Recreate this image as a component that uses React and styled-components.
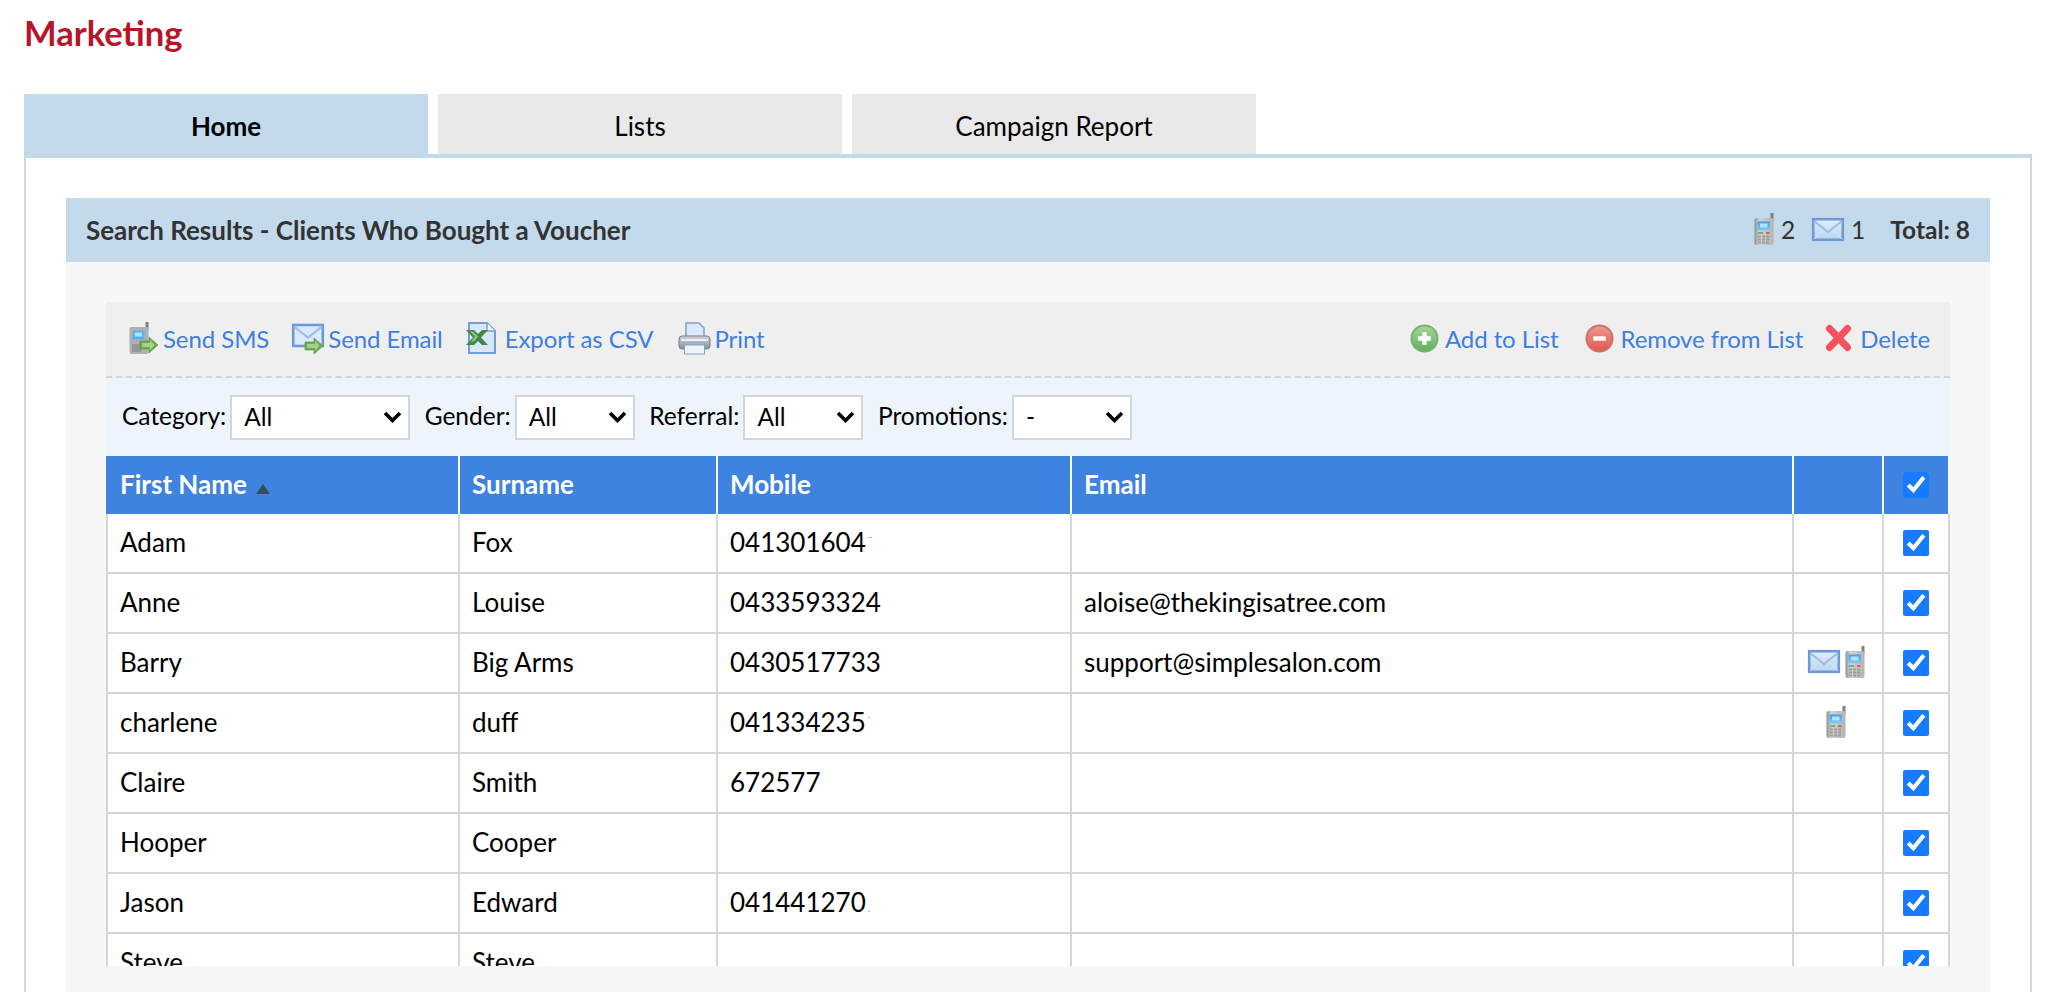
import React from 'react';
import styled, { createGlobalStyle } from 'styled-components';

const Global = createGlobalStyle`
  html, body { margin: 0; height: 100%; overflow: hidden; background: #fff; }
  body { font-family: Lato, "Open Sans", sans-serif; font-size: 24px; color: #000; }
  #root { height: 100%; }
`;

const Page = styled.div`
  height: 992px; display: flex; flex-direction: column; padding: 0 26px 0 24px; box-sizing: border-box;
`;
const Title = styled.h1`
  margin: 0; height: 94px; padding-top: 12px; box-sizing: border-box;
  font-size: 34.6px; line-height: 42px; font-weight: 700; color: #b71529;
`;
const Tabs = styled.div`display: flex; gap: 10px; height: 60px;`;
const Tab = styled.div`
  width: 404px; height: ${p => (p.$active ? 64 : 60)}px; flex: none;
  display: flex; align-items: center; justify-content: center; padding-top: ${p => (p.$active ? 0 : 4)}px; box-sizing: border-box;
  background: ${p => (p.$active ? '#c3daed' : '#e9e9e9')};
  font-weight: ${p => (p.$active ? 700 : 400)}; color: #000; font-size: 26px;
`;
const Panel = styled.div`
  flex: 1; min-height: 0; display: flex; flex-direction: column; box-sizing: border-box;
  border-top: 4px solid #c3daed; border-left: 2px solid #d5d5d5; border-right: 2px solid #d5d5d5;
  padding: 40px 40px 0;
`;
const Section = styled.section`flex: 1; min-height: 0; display: flex; flex-direction: column; background: #f7f7f7;`;
const SectionHead = styled.header`
  height: 64px; flex: none; display: flex; align-items: center; justify-content: space-between;
  background: #c3daed; padding: 0 20px; color: #333;
`;
const SectionTitle = styled.h2`margin: 0; font-size: 26px; font-weight: 700; color: #333;`;
const Stats = styled.div`display: flex; align-items: center; font-size: 24.5px; color: #333; padding-bottom: 2px;`;
const StatCount = styled.span`margin: 0 17px 0 7px;`;
const Total = styled.strong`margin-left: 8px; font-weight: 700;`;
const SectionBody = styled.div`flex: 1; min-height: 0; display: flex; flex-direction: column; padding: 40px 40px 26px;`;

const Toolbar = styled.div`
  height: 76px; flex: none; box-sizing: border-box; display: flex; align-items: center; justify-content: space-between;
  background: #efefef; border-bottom: 2px dashed #d5d5d5; padding: 0 20px 2px 23px;
`;
const Actions = styled.div`display: flex; align-items: center;`;
const Action = styled.a`
  display: flex; align-items: center; gap: ${p => p.$gap ?? 5}px; margin-left: ${p => p.$ml ?? 0}px;
  color: #3e7fe0; text-decoration: none; font-size: 24px; letter-spacing: -0.08px;
`;
const Filters = styled.div`
  height: 78px; flex: none; box-sizing: border-box; display: flex; align-items: center; gap: 14.5px;
  background: #edf4fb; padding: 0 16px;
`;
const Filter = styled.label`display: flex; align-items: center; gap: 4px; font-size: 24.5px; color: #000; line-height: 30px; padding-bottom: 0;`;
const Select = styled.select`
  appearance: none; width: ${p => p.$w}px; height: 45px; box-sizing: border-box;
  border: 2px solid #d5d5d5; border-radius: 0; padding: 0 0 2px 12px; margin: 0;
  font: 24.5px Lato, sans-serif; color: #000;
  background: #fff url("data:image/svg+xml,%3Csvg xmlns='http://www.w3.org/2000/svg' width='19' height='12'%3E%3Cpath d='M2 2l7.5 7.5L17 2' fill='none' stroke='%23000' stroke-width='3.6'/%3E%3C/svg%3E") no-repeat right 6px center;
`;
const FilterLabel = styled.span`margin-top: -2px;`;
const TableWrap = styled.div`flex: 1; min-height: 0; overflow: hidden;`;
const Table = styled.table`
  width: 1844px; table-layout: fixed; border-collapse: separate; border-spacing: 0; background: #fff;
`;
const Th = styled.th`
  height: 58px; box-sizing: border-box; padding: 0 0 2px 12px; text-align: left;
  background: #3e83e0; color: #fff; font-size: 26px; font-weight: 700; border-right: 2px solid #fff;
  &:first-child { padding-left: 14px; }
  &:last-child { border-right-color: #f7f7f7; padding: 0; }
`;
const SortArrow = styled.span`
  display: inline-block; margin-left: 9px; width: 0; height: 0; vertical-align: 0;
  border-left: 7.5px solid transparent; border-right: 7.5px solid transparent; border-bottom: 10px solid #3a4a5e;
`;
const Td = styled.td`
  height: 60px; box-sizing: border-box; padding: 0 0 3px 12px; font-size: 26px; color: #000;
  border-right: 2px solid #d5d5d5; border-bottom: 2px solid #d5d5d5; white-space: nowrap;
  &:first-child { border-left: 2px solid #d5d5d5; }
`;
const IconCell = styled(Td)`padding: 0;`;
const IconGroup = styled.div`display: flex; align-items: center; justify-content: center; gap: 5px; padding: 0 4px 3px 0;`;
const CheckCell = styled(Td)`padding: 0;`;
const Check = styled.input.attrs({ type: 'checkbox' })`
  display: block; width: 26px; height: 26px; margin: 0 auto; accent-color: #167bff;
`;
const Smudge = styled.span`
  display: inline-block; width: ${p => p.$w}px; height: 1px; background: #b5b5b5; margin-left: 2px;
  vertical-align: ${p => p.$v}px;
`;
const Icon = styled.svg`flex: none; display: block; filter: blur(0.45px); overflow: visible;`;

const Phone = () => (
  <Icon width="20" height="32" viewBox="0 0 20 32">
    <defs>
      <linearGradient id="ph" x1="0" x2="1"><stop offset="0" stopColor="#8f8f8f" /><stop offset=".25" stopColor="#d2d2d2" /><stop offset="1" stopColor="#b4b4b4" /></linearGradient>
      <linearGradient id="scr" x1="0" y1="0" x2="0" y2="1"><stop offset="0" stopColor="#3aa0ec" /><stop offset="1" stopColor="#86c9f6" /></linearGradient>
    </defs>
    <rect x="16.5" y="0" width="3" height="8" fill="#808080" />
    <rect x="0.5" y="5" width="19" height="27" rx="2" fill="url(#ph)" />
    <rect x="3.5" y="8.5" width="12.5" height="9" rx="1" fill="url(#scr)" />
    <rect x="6" y="10.5" width="7.5" height="4" fill="#b3e0fb" />
    <rect x="4" y="19" width="5" height="2" fill="#7cb06a" />
    <rect x="12" y="19" width="3.5" height="2" fill="#d9636a" />
    {[22.5, 25.5, 28.5].map(y => [4, 8, 12].map(x => <rect key={`${x}-${y}`} x={x} y={y} width="3" height="2" fill="#9c9c9c" />))}
  </Icon>
);
const Envelope = () => (
  <Icon width="32" height="23" viewBox="0 0 32 23">
    <defs><linearGradient id="env" x1="0" y1="0" x2="0" y2="1"><stop offset="0" stopColor="#e2edfb" /><stop offset="1" stopColor="#bcd4f2" /></linearGradient></defs>
    <rect x="1.2" y="1.2" width="29.6" height="20.6" fill="url(#env)" stroke="#6e9ad3" strokeWidth="2.6" />
    <path d="M2 3l14 11 14-11" fill="none" stroke="#9dbde6" strokeWidth="2.2" />
    <path d="M2 21l9-9M30 21l-9-9" fill="none" stroke="#d4e3f5" strokeWidth="1" />
  </Icon>
);
const Arrow = ({ x, y }) => (
  <g transform={`translate(${x} ${y})`}>
    <path d="M0 4h9V0l9 8-9 8v-4H0z" fill="#6fab55" stroke="#5c9a46" strokeWidth=".7" />
    <path d="M2 6h8V3l4.5 5-4.5 5V10H2z" fill="#a5d18f" />
  </g>
);
const SmsIcon = () => (
  <Icon width="30" height="32" viewBox="0 0 30 32">
    <rect x="16.5" y="0" width="3" height="8" fill="#808080" />
    <rect x="0.5" y="5" width="19" height="27" rx="2" fill="#b0b0b0" />
    <rect x="3.5" y="8.5" width="12" height="9" fill="#59b1ef" />
    <rect x="6" y="10.5" width="7" height="4" fill="#b3e0fb" />
    <rect x="3" y="22" width="9" height="8" fill="#969696" />
    <Arrow x={11} y={15} />
  </Icon>
);
const MailSendIcon = () => (
  <Icon width="32" height="32" viewBox="0 0 32 32">
    <rect x="1.2" y="3" width="29.6" height="21" fill="#dce9fa" stroke="#6e9ad3" strokeWidth="2.6" />
    <path d="M2 4.5l14 11 14-11" fill="none" stroke="#9dbde6" strokeWidth="2.2" />
    <Arrow x={13} y={16} />
  </Icon>
);
const ExcelIcon = () => (
  <Icon width="30" height="32" viewBox="0 0 30 32">
    <path d="M3 1h18l8 8v22H3z" fill="#d8e8fa" stroke="#6e9fd8" strokeWidth="2" />
    <path d="M21 1v8h8" fill="#f2f7fd" stroke="#6e9fd8" strokeWidth="1.5" />
    <path d="M0 8h8l4 4 4-4h6l-7 7.5 7 7.5h-6l-4-4-4 4H0l7-7.5z" fill="#3f8a45" />
    <path d="M4 9.5h3l5 5-4 5H5l4-5z" fill="#8fc48f" />
  </Icon>
);
const PrintIcon = () => (
  <Icon width="33" height="33" viewBox="0 0 33 33">
    <defs><linearGradient id="pr" x1="0" y1="0" x2="0" y2="1"><stop offset="0" stopColor="#d0d3d8" /><stop offset="1" stopColor="#8a8e96" /></linearGradient></defs>
    <path d="M8 1h13l5 5v11H8z" fill="#dbe9fa" stroke="#7ea4d4" strokeWidth="1.6" />
    <rect x="1" y="14" width="31" height="13" rx="3" fill="url(#pr)" stroke="#777c85" />
    <rect x="3" y="17" width="27" height="2" fill="#eceef1" />
    <rect x="6.5" y="23" width="20" height="9" fill="#eef3fa" stroke="#7ea4d4" />
  </Icon>
);
const Round = ({ id, from, to, edge, children }) => (
  <Icon width="29" height="29" viewBox="0 0 30 30">
    <defs><linearGradient id={id} x1="0" y1="0" x2="0" y2="1"><stop offset="0" stopColor={from} /><stop offset="1" stopColor={to} /></linearGradient></defs>
    <circle cx="15" cy="15" r="13.5" fill={`url(#${id})`} stroke={edge} strokeWidth="2" />
    {children}
  </Icon>
);
const AddIcon = () => (
  <Round id="add" from="#a8d69a" to="#5fae5a" edge="#7bb074"><path d="M15 8.5v13M8.5 15h13" stroke="#fff" strokeWidth="4.5" /></Round>
);
const RemoveIcon = () => (
  <Round id="rem" from="#f09a8e" to="#e2564f" edge="#c9736c"><path d="M8.5 15h13" stroke="#fff" strokeWidth="4.5" /></Round>
);
const DeleteIcon = () => (
  <Icon width="27" height="28" viewBox="0 0 27 28"><path d="M4.5 4.5l18 19M22.5 4.5l-18 19" stroke="#f4525c" strokeWidth="7" strokeLinecap="round" /></Icon>
);

const rows = [
  ['Adam', 'Fox', '041301604', '', null, [4, 14]],
  ['Anne', 'Louise', '0433593324', 'aloise@thekingisatree.com'],
  ['Barry', 'Big Arms', '0430517733', 'support@simplesalon.com', 'both'],
  ['charlene', 'duff', '041334235', '', 'phone', [2, 14]],
  ['Claire', 'Smith', '672577', ''],
  ['Hooper', 'Cooper', '', ''],
  ['Jason', 'Edward', '041441270', '', null, [2, 0]],
  ['Steve', 'Steve', '', ''],
];

export default function App() {
  return (
    <Page>
      <Global />
      <Title>Marketing</Title>
      <Tabs>
        <Tab $active>Home</Tab>
        <Tab>Lists</Tab>
        <Tab>Campaign Report</Tab>
      </Tabs>
      <Panel>
        <Section>
          <SectionHead>
            <SectionTitle>Search Results - Clients Who Bought a Voucher</SectionTitle>
            <Stats>
              <Phone />
              <StatCount>2</StatCount>
              <Envelope />
              <StatCount>1</StatCount>
              <Total>Total: 8</Total>
            </Stats>
          </SectionHead>
          <SectionBody>
            <Toolbar>
              <Actions>
                <Action $gap={4}><SmsIcon />Send SMS</Action>
                <Action $gap={4} $ml={23}><MailSendIcon />Send Email</Action>
                <Action $gap={9} $ml={23}><ExcelIcon />Export as CSV</Action>
                <Action $gap={3} $ml={25}><PrintIcon />Print</Action>
              </Actions>
              <Actions>
                <Action $gap={6}><AddIcon />Add to List</Action>
                <Action $gap={6} $ml={27}><RemoveIcon />Remove from List</Action>
                <Action $gap={8} $ml={22}><DeleteIcon />Delete</Action>
              </Actions>
            </Toolbar>
            <Filters>
              <Filter><FilterLabel>Category:</FilterLabel><Select $w={180}><option>All</option></Select></Filter>
              <Filter><FilterLabel>Gender:</FilterLabel><Select $w={120}><option>All</option></Select></Filter>
              <Filter><FilterLabel>Referral:</FilterLabel><Select $w={120}><option>All</option></Select></Filter>
              <Filter><FilterLabel>Promotions:</FilterLabel><Select $w={120}><option>-</option></Select></Filter>
            </Filters>
            <TableWrap>
              <Table>
                <colgroup>
                  <col style={{ width: 354 }} />
                  <col style={{ width: 258 }} />
                  <col style={{ width: 354 }} />
                  <col style={{ width: 722 }} />
                  <col style={{ width: 90 }} />
                  <col style={{ width: 66 }} />
                </colgroup>
                <thead>
                  <tr>
                    <Th>First Name<SortArrow /></Th>
                    <Th>Surname</Th>
                    <Th>Mobile</Th>
                    <Th>Email</Th>
                    <Th />
                    <Th><Check defaultChecked /></Th>
                  </tr>
                </thead>
                <tbody>
                  {rows.map(([first, last, mobile, email, icons, mark]) => (
                    <tr key={first}>
                      <Td>{first}</Td>
                      <Td>{last}</Td>
                      <Td>{mobile}{mark && <Smudge $w={mark[0]} $v={mark[1]} />}</Td>
                      <Td>{email}</Td>
                      <IconCell>
                        {icons && (
                          <IconGroup>
                            {icons === 'both' && <Envelope />}
                            <Phone />
                          </IconGroup>
                        )}
                      </IconCell>
                      <CheckCell><Check defaultChecked /></CheckCell>
                    </tr>
                  ))}
                </tbody>
              </Table>
            </TableWrap>
          </SectionBody>
        </Section>
      </Panel>
    </Page>
  );
}
